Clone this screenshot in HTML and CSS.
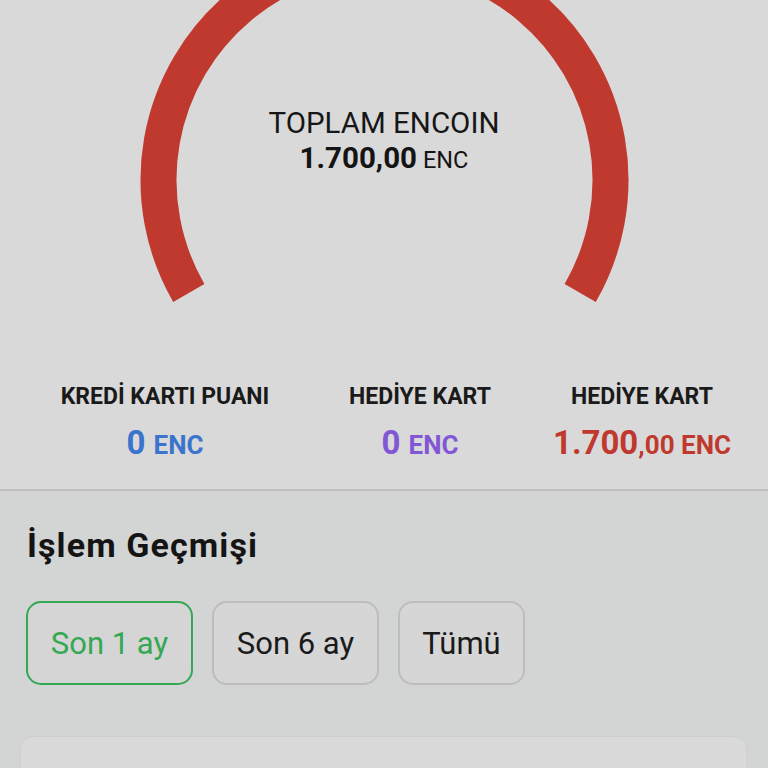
FILE: index.html
```html
<!DOCTYPE html>
<html lang="tr">
<head>
<meta charset="utf-8">
<title>Encoin</title>
<link rel="stylesheet" href="styles.css">
</head>
<body>
<section class="gauge">
  <svg class="gauge-arc" width="768" height="350" viewBox="0 0 768 350" aria-hidden="true">
    <path d="M 188.8 293 A 226 226 0 1 1 580.2 293" fill="none" stroke="#c0392f" stroke-width="36" stroke-linecap="butt"/>
  </svg>
  <div class="gauge-text">
    <div class="gauge-title">TOPLAM ENCOIN</div>
    <div class="gauge-amount"><b>1.700,00</b> <span>ENC</span></div>
  </div>
</section>
<section class="stats">
  <div class="stat">
    <div class="stat-label">KREDİ KARTI PUANI</div>
    <div class="stat-value blue">0 <small>ENC</small></div>
  </div>
  <div class="stat">
    <div class="stat-label">HEDİYE KART</div>
    <div class="stat-value purple">0 <small>ENC</small></div>
  </div>
  <div class="stat">
    <div class="stat-label">HEDİYE KART</div>
    <div class="stat-value red">1.700<small>,00 ENC</small></div>
  </div>
</section>
<section class="history">
  <h2 class="history-title">İşlem Geçmişi</h2>
  <div class="filters">
    <button class="filter active">Son 1 ay</button>
    <button class="filter">Son 6 ay</button>
    <button class="filter">Tümü</button>
  </div>
  <div class="card"></div>
</section>
</body>
</html>
```
FILE: styles.css
```css
html, body {
  margin: 0;
  padding: 0;
}
body {
  background: #d3d4d4;
  font-family: Roboto, "Noto Sans", sans-serif;
  color: #141414;
  width: 768px;
  height: 768px;
  overflow: hidden;
}
.gauge {
  position: relative;
  height: 350px;
  background: #d9d9d9;
}
.gauge-arc {
  position: absolute;
  top: 0;
  left: 0;
}
.gauge-text {
  position: relative;
  padding-top: 106px;
  text-align: center;
}
.gauge-title {
  font-size: 29.5px;
  line-height: 34px;
  color: #161616;
}
.gauge-amount {
  line-height: 36px;
}
.gauge-amount b {
  font-size: 29.5px;
  font-weight: 700;
}
.gauge-amount span {
  margin-left: 2px;
  font-size: 23.5px;
}
.stats {
  display: grid;
  grid-template-columns: 250px 260px 184px;
  padding: 33px 34px 26px 40px;
  background: #d9d9d9;
  border-bottom: 2px solid #bfbfbf;
}
.stat {
  text-align: center;
}
.stat-label {
  font-size: 23px;
  line-height: 28px;
  font-weight: 700;
  color: #1a1a1a;
}
.stat-value {
  margin-top: 14px;
  font-size: 33px;
  line-height: 36px;
  font-weight: 700;
}
.stat-value small {
  font-size: 26px;
}
.blue { color: #3b74cc; }
.purple { color: #8257d6; }
.red { color: #c0392f; }
.history {
  padding: 34px 22px 0 21px;
}
.history-title {
  margin: 0 0 36px 6px;
  font-size: 34px;
  line-height: 40px;
  font-weight: 700;
  letter-spacing: 1.1px;
  color: #141414;
}
.filters {
  display: flex;
  gap: 19px;
  padding-left: 5px;
}
.filter {
  height: 84px;
  padding: 0 20px;
  border: 2px solid #bdbdbd;
  border-radius: 15px;
  background: #d6d6d6;
  font-family: Roboto, "Noto Sans", sans-serif;
  font-size: 31px;
  color: #1a1a1a;
}
.filter.active {
  border-color: #34a852;
  color: #34a852;
  background: #d5d5d5;
}
.filters .filter:nth-child(1) { width: 167px; }
.filters .filter:nth-child(2) { width: 167px; }
.filters .filter:nth-child(3) { width: 127px; }
.card {
  margin-top: 52px;
  height: 31px;
  background: #dadada;
  border-radius: 12px 12px 0 0;
  box-shadow: 0 0 2px rgba(0,0,0,0.08);
}
```
